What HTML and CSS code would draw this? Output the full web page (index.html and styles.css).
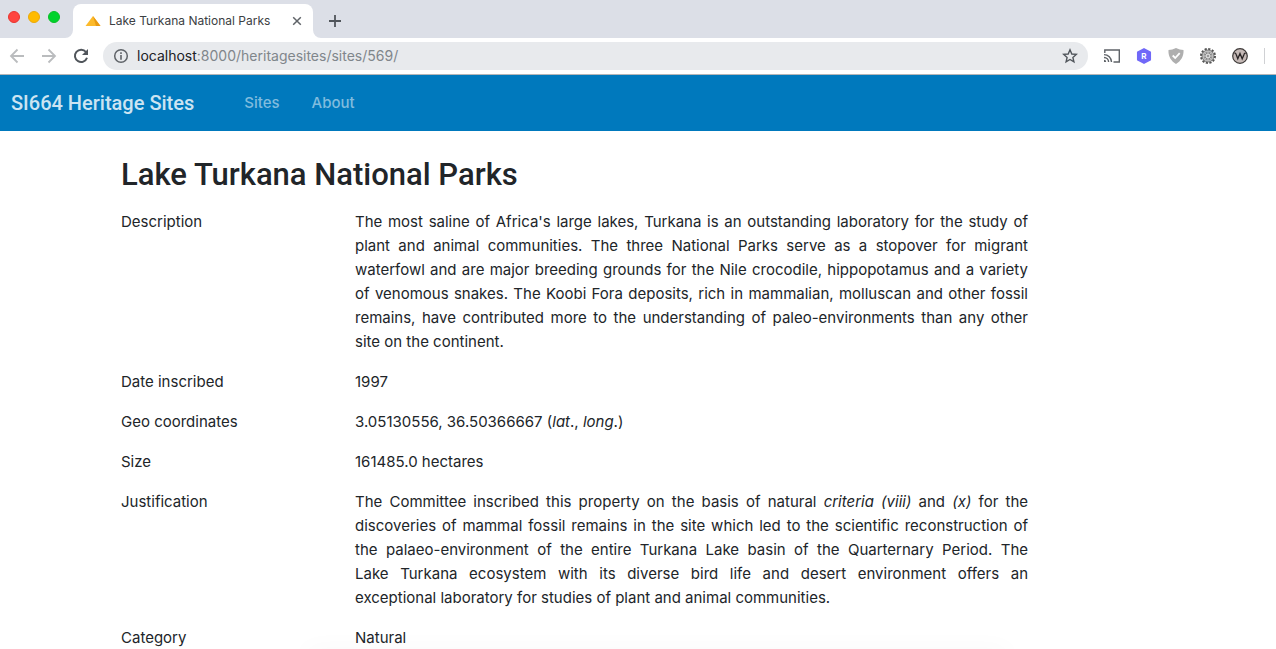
FILE: index.html
```html
<!DOCTYPE html>
<html lang="en">
<head>
<meta charset="utf-8">
<title>Lake Turkana National Parks</title>
<link rel="stylesheet" href="styles.css">
</head>
<body>
<div class="browser">
  <div class="tabstrip">
    <div class="lights">
      <button class="light light-close" aria-label="Close window"></button>
      <button class="light light-min" aria-label="Minimize window"></button>
      <button class="light light-max" aria-label="Zoom window"></button>
    </div>
    <div class="tab">
      <svg class="curve curve-left" width="8" height="8" viewBox="0 0 8 8"><path d="M8 0V8H0A8 8 0 0 0 8 0Z" fill="#fff"/></svg>
      <svg width="16" height="12" viewBox="0 0 16 12"><path d="M8 1 15.500 11H.5Z" fill="#fcba2b"/><path d="M8 1 15.500 11H11Z" fill="#e99a12"/></svg>
      <span class="tab-title">Lake Turkana National Parks</span>
      <button class="icon-button tab-close" aria-label="Close tab"><svg width="10" height="10" viewBox="0 0 10 10"><path d="M1.200 1.200 8.800 8.800M8.800 1.200 1.200 8.800" stroke="#5f6368" stroke-width="1.500"/></svg></button>
      <svg class="curve curve-right" width="8" height="8" viewBox="0 0 8 8"><path d="M0 0V8H8A8 8 0 0 1 0 0Z" fill="#fff"/></svg>
    </div>
    <button class="icon-button new-tab" aria-label="New tab"><svg width="12" height="12" viewBox="0 0 12 12"><path d="M6 0V12M0 6H12" stroke="#50555b" stroke-width="1.800"/></svg></button>
  </div>
  <div class="toolbar">
    <div class="history">
      <button class="icon-button" aria-label="Back"><svg width="16" height="16" viewBox="0 0 16 16" fill="none" stroke="#babcbe" stroke-width="1.800"><path d="M15 8H2.500M8.500 1.500 2 8 8.500 14.500"/></svg></button>
      <button class="icon-button" aria-label="Forward"><svg width="16" height="16" viewBox="0 0 16 16" fill="none" stroke="#babcbe" stroke-width="1.800"><path d="M1 8H13.500M7.500 1.500 14 8 7.500 14.500"/></svg></button>
      <button class="icon-button" aria-label="Reload"><svg width="16" height="16" viewBox="0 0 16 16"><path d="M13 4A6.200 6.200 0 1 0 14 9.800" fill="none" stroke="#50555b" stroke-width="2"/><path d="M15 1V7H9Z" fill="#50555b"/></svg></button>
    </div>
    <div class="omnibox">
      <svg width="16" height="16" viewBox="0 0 16 16"><circle cx="8" cy="8" r="6.300" fill="none" stroke="#5f6368" stroke-width="1.500"/><path d="M8 7V11.800M8 4.300V6" stroke="#5f6368" stroke-width="1.600"/></svg>
      <a class="address" href="#"><span class="host">localhost</span>:8000/heritagesites/sites/569/</a>
      <button class="icon-button" aria-label="Bookmark"><svg width="16" height="16" viewBox="0 0 16 16"><path d="M8 1.800 9.800 6 14.300 6.400 10.900 9.400 11.900 13.900 8 11.500 4.100 13.900 5.100 9.400 1.700 6.400 6.200 6Z" fill="none" stroke="#50555b" stroke-width="1.400"/></svg></button>
    </div>
    <div class="extensions">
      <button class="icon-button" aria-label="Cast"><svg width="16" height="16" viewBox="0 0 16 16" fill="none" stroke="#5f6368" stroke-width="1.400"><path d="M.8 5V2H15.300V14H9.500"/><path d="M0 6.600A7.500 7.500 0 0 1 7.500 14.100M0 9.500A4.600 4.600 0 0 1 4.600 14.100"/><path d="M0 11.800A2.200 2.200 0 0 1 2.200 14H0Z" fill="#5f6368" stroke="none"/></svg></button>
      <button class="icon-button" aria-label="R extension"><svg width="16" height="16" viewBox="0 0 16 16"><path d="M8 .8 14.300 4.200V11.800L8 15.200 1.700 11.800V4.200Z" fill="#7068f8" stroke="#7068f8" stroke-width="1.500" stroke-linejoin="round"/><text class="badge-r" x="8" y="11" text-anchor="middle">R</text></svg></button>
      <button class="icon-button" aria-label="Shield extension"><svg width="16" height="16" viewBox="0 0 16 16"><path d="M8 0C10.500 1.300 13 2 15.500 2 16 8 13 13 8 16 3 13 0 8 .5 2 3 2 5.500 1.300 8 0Z" fill="#afafaf"/><path d="M4.700 7.500 7.200 10 11.700 5.200" fill="none" stroke="#fff" stroke-width="1.800"/></svg></button>
      <button class="icon-button" aria-label="Gear extension"><svg width="16" height="16" viewBox="0 0 16 16"><circle cx="8" cy="8" r="7" fill="none" stroke="#555" stroke-width="2" stroke-dasharray="2.200 1.465"/><circle cx="8" cy="8" r="6" fill="#bbb" stroke="#666" stroke-width=".8"/><circle cx="8" cy="8" r="4" fill="#888"/><path d="M8 4V12M4 8H12M5.200 5.200 10.800 10.800M10.800 5.200 5.200 10.800" stroke="#ddd" stroke-width=".8"/><circle cx="8" cy="8" r="1.800" fill="#999" stroke="#eee" stroke-width=".8"/></svg></button>
      <button class="icon-button" aria-label="W extension"><svg width="16" height="16" viewBox="0 0 16 16"><circle cx="8" cy="8" r="7.300" fill="#c5b9b6" stroke="#3d3938" stroke-width="1.200"/><path d="M2.300 5.300Q3.600 4.500 4.200 6.500L5.800 10.800 8 5.500 10.200 10.800 12 6.500Q12.700 4.600 13.700 5.500" fill="none" stroke="#292525" stroke-width="1.300"/></svg></button>
      <span class="divider"></span>
    </div>
  </div>
  <nav class="navbar">
    <a class="brand" href="#">SI664 Heritage Sites</a>
    <a class="nav-link" href="#">Sites</a>
    <a class="nav-link" href="#">About</a>
  </nav>
  <main class="page">
    <div class="container">
      <h1 class="title">Lake Turkana National Parks</h1>
      <dl class="record">
        <dt>Description</dt>
        <dd>The most saline of Africa's large lakes, Turkana is an outstanding laboratory for the study of plant and animal communities. The three National Parks serve as a stopover for migrant waterfowl and are major breeding grounds for the Nile crocodile, hippopotamus and a variety of venomous snakes. The Koobi Fora deposits, rich in mammalian, molluscan and other fossil remains, have contributed more to the understanding of paleo-environments than any other site on the continent.</dd>
        <dt>Date inscribed</dt>
        <dd>1997</dd>
        <dt>Geo coordinates</dt>
        <dd>3.05130556, 36.50366667 (<em>lat</em>., <em>long</em>.)</dd>
        <dt>Size</dt>
        <dd>161485.0 hectares</dd>
        <dt>Justification</dt>
        <dd>The Committee inscribed this property on the basis of natural <em>criteria (viii)</em> and <em>(x)</em> for the discoveries of mammal fossil remains in the site which led to the scientific reconstruction of the palaeo-environment of the entire Turkana Lake basin of the Quarternary Period. The <span class="phrase">Lake Turkana</span> ecosystem with its diverse bird life and desert environment offers an <span class="phrase">exceptional laboratory</span> for studies of plant and animal communities.</dd>
        <dt>Category</dt>
        <dd>Natural</dd>
      </dl>
    </div>
  </main>
</div>
</body>
</html>
```
FILE: styles.css
```css
* { box-sizing: border-box; }
body {
  margin: 0;
  background: #fff;
  color: #212529;
  font-family: Inter, "Liberation Sans", sans-serif;
  font-size: 15px;
  line-height: 24px;
}
a { text-decoration: none; }
svg { display: block; flex: none; }
button { border: 0; padding: 0; }
.browser {
  display: flex;
  flex-direction: column;
  height: 100vh;
  overflow: hidden;
}
.icon-button { background: none; flex: none; }
.tabstrip {
  display: flex;
  flex: none;
  height: 38px;
  background: #dcdfe7;
}
.lights {
  display: flex;
  gap: 8px;
  padding: 11px 13px 0 8px;
}
.light { width: 12px; height: 12px; border-radius: 50%; }
.light-close { background: #ff443f; border: 1px solid #e8352f; }
.light-min { background: #ffbb00; border: 1px solid #eba90a; }
.light-max { background: #00d32c; border: 1px solid #0abf27; }
.tab {
  position: relative;
  display: flex;
  align-items: center;
  width: 240px;
  margin-top: 4px;
  padding: 0 11px 0 12px;
  border-radius: 8px 8px 0 0;
  background: #fff;
}
.curve { position: absolute; bottom: 0; }
.curve-left { right: 100%; }
.curve-right { left: 100%; }
.tab-title {
  flex: 1;
  padding-left: 8px;
  color: #3c4043;
  font-size: 12px;
  white-space: nowrap;
}
.new-tab { margin: 4px 0 0 16px; }
.toolbar {
  display: flex;
  flex: none;
  align-items: center;
  height: 37px;
  padding: 0 11px 0 9px;
  border-bottom: 1px solid #b4b5b7;
  background: #fff;
}
.history { display: flex; gap: 16px; padding-right: 14px; }
.omnibox {
  display: flex;
  flex: 1;
  align-items: center;
  height: 28px;
  padding: 0 10px;
  border-radius: 14px;
  background: #e8eaed;
}
.address {
  flex: 1;
  padding-left: 8px;
  color: #80868b;
  font-size: 14px;
}
.host { color: #202124; }
.extensions { display: flex; align-items: center; gap: 16px; padding-left: 16px; }
.divider { width: 1px; height: 16px; background: #d0d1d4; }
.badge-r { fill: #fff; font: bold 8px Inter, sans-serif; }
.navbar {
  display: flex;
  flex: none;
  align-items: center;
  gap: 32px;
  height: 56px;
  padding: 0 11px;
  background: #0079bd;
}
.brand {
  margin-right: 18px;
  color: #cce4f2;
  font-family: Roboto, sans-serif;
  font-size: 20px;
  font-weight: 500;
}
.nav-link { color: #80bcde; font-weight: 500; }
.page { position: relative; flex: 1; min-height: 0; }
.page::after {
  content: "";
  position: absolute;
  top: 100%;
  left: 24%;
  right: 21%;
  height: 16px;
  box-shadow: 0 0 24px rgba(0, 0, 0, 0.03);
}
.container { max-width: 1064px; margin: 0 auto; padding: 25px 15px 0; }
.title {
  margin: 0 0 16px;
  font-family: Roboto, sans-serif;
  font-size: 31px;
  font-weight: 500;
  line-height: 38px;
}
.record {
  display: grid;
  grid-template-columns: 234px minmax(0, 673px);
  row-gap: 16px;
  margin: 0;
}
.record dt, .record dd { margin: 0; }
.record dd { text-align: justify; }
.phrase { white-space: nowrap; }
```
